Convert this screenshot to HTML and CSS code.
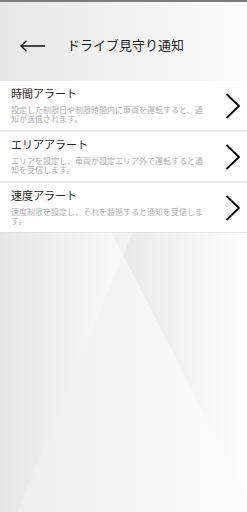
FILE: index.html
```html
<!DOCTYPE html>
<html lang="ja">
<head>
<meta charset="utf-8">
<link rel="stylesheet" href="styles.css">
</head>
<body>
<div class="topbar"></div>
<header class="header">
  <svg class="back" width="26" height="12" viewBox="0 0 26 12"><path d="M1 6H25M6.5 0.8L1 6L6.5 11.2" fill="none" stroke="#111" stroke-width="1.4"/></svg>
  <h1 class="heading">ドライブ見守り通知</h1>
</header>
<ul class="list">
  <li class="item">
    <div class="text">
      <div class="title">時間アラート</div>
      <p class="desc">設定した制限日や制限時間内に車両を運転すると、通知が送信されます。</p>
    </div>
    <svg class="chev" width="16" height="26" viewBox="0 0 16 26"><path d="M1.5 1L14 13L1.5 25" fill="none" stroke="#000" stroke-width="1.8"/></svg>
  </li>
  <li class="item">
    <div class="text">
      <div class="title">エリアアラート</div>
      <p class="desc">エリアを設定し、車両が設定エリア外で運転すると通知を受信します。</p>
    </div>
    <svg class="chev" width="16" height="26" viewBox="0 0 16 26"><path d="M1.5 1L14 13L1.5 25" fill="none" stroke="#000" stroke-width="1.8"/></svg>
  </li>
  <li class="item">
    <div class="text">
      <div class="title">速度アラート</div>
      <p class="desc">速度制限を設定し、それを超過すると通知を受信します。</p>
    </div>
    <svg class="chev" width="16" height="26" viewBox="0 0 16 26"><path d="M1.5 1L14 13L1.5 25" fill="none" stroke="#000" stroke-width="1.8"/></svg>
  </li>
</ul>
</body>
</html>
```
FILE: styles.css
```css
html, body {
  margin: 0;
  padding: 0;
}
html {
  background-color: #f4f4f4;
  background-image: url("data:image/svg+xml,%3Csvg xmlns='http://www.w3.org/2000/svg' width='247' height='512' viewBox='0 0 247 512' preserveAspectRatio='none'%3E%3Cdefs%3E%3ClinearGradient id='a' gradientUnits='userSpaceOnUse' x1='0' y1='0' x2='125' y2='0'%3E%3Cstop offset='0' stop-color='%23e6e6e6'/%3E%3Cstop offset='1' stop-color='%23f9f9f9'/%3E%3C/linearGradient%3E%3ClinearGradient id='b' gradientUnits='userSpaceOnUse' x1='125' y1='0' x2='247' y2='0'%3E%3Cstop offset='0' stop-color='%23e9e9e9'/%3E%3Cstop offset='1' stop-color='%23fefefe'/%3E%3C/linearGradient%3E%3ClinearGradient id='c' gradientUnits='userSpaceOnUse' x1='0' y1='0' x2='247' y2='0'%3E%3Cstop offset='0' stop-color='%23ececec'/%3E%3Cstop offset='1' stop-color='%23fcfcfc'/%3E%3C/linearGradient%3E%3ClinearGradient id='d' gradientUnits='userSpaceOnUse' x1='0' y1='0' x2='247' y2='0'%3E%3Cstop offset='0' stop-color='%23eaeaea'/%3E%3Cstop offset='1' stop-color='%23fbfbfb'/%3E%3C/linearGradient%3E%3C/defs%3E%3Cpolygon points='0,0 -7,0 123,255 17.6,512 0,512' fill='url(%23a)'/%3E%3Cpolygon points='227,0 247,0 247,498 123,255' fill='url(%23b)'/%3E%3Cpolygon points='123,255 17.6,512 247,512 247,498' fill='url(%23c)'/%3E%3Cpolygon points='-7,0 227,0 123,255' fill='url(%23d)'/%3E%3C/svg%3E");
  background-repeat: no-repeat;
  background-size: 100% 512px;
  min-height: 100%;
}
body {
  min-height: 512px;
  font-family: "Noto Sans CJK JP", "Noto Sans", sans-serif;
}
.topbar {
  height: 2px;
  background: #7c7c7c;
}
.header {
  height: 79px;
  box-sizing: border-box;
  display: flex;
  align-items: center;
  padding: 6px 0 0 20px;
  background: linear-gradient(to right, #e7e7e7, #fbfbfb);
}
.back {
  display: block;
  margin-top: 2px;
}
.heading {
  margin: 0 0 0 21px;
  font-size: 13px;
  line-height: 15px;
  font-weight: 400;
  color: #1e1e1e;
}
.list {
  list-style: none;
  margin: 0;
  padding: 0;
  border-bottom: 1px solid #e4e4e4;
}
.item {
  height: 49px;
  box-sizing: border-box;
  background: #ffffff;
  display: flex;
  align-items: center;
  justify-content: space-between;
  padding: 0 6px 0 11px;
}
.item + .item {
  border-top: 2px solid #ebebeb;
  height: 51px;
}
.text {
  width: 198px;
  align-self: flex-start;
  padding-top: 6px;
}
.title {
  font-size: 11px;
  line-height: 13px;
  color: #2a2a2a;
}
.desc {
  margin: 5px 0 0;
  font-size: 8px;
  line-height: 9.4px;
  color: #b0b0b0;
}
.chev {
  display: block;
}
```
